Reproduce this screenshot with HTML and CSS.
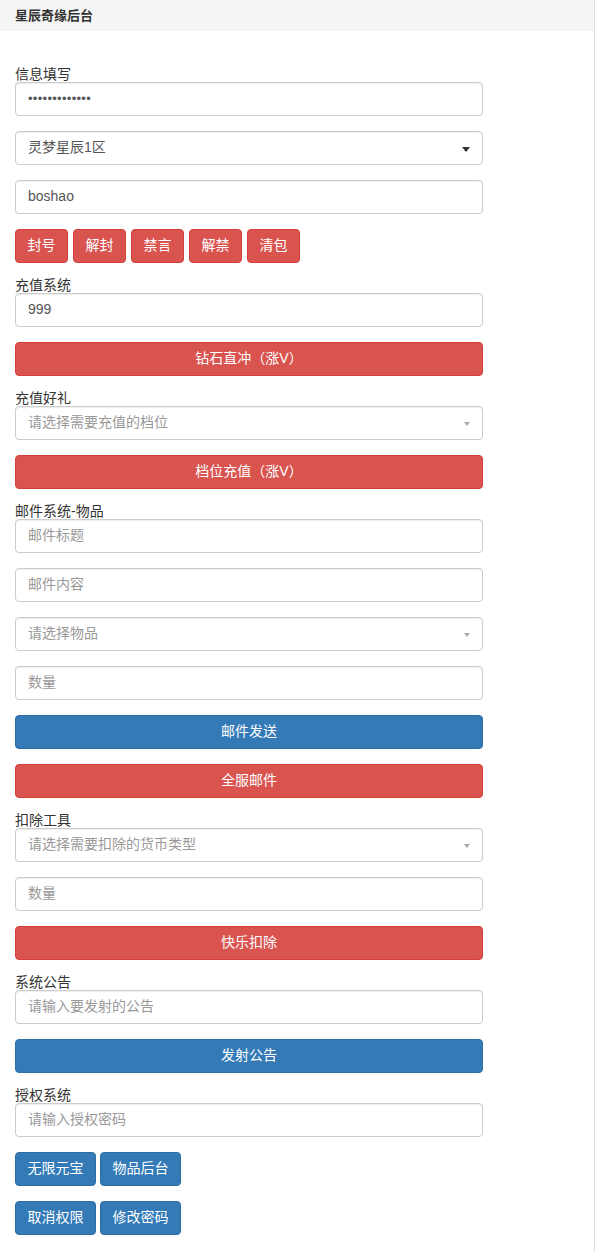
FILE: index.html
```html
<!DOCTYPE html>
<html lang="zh">
<head>
<meta charset="utf-8">
<title>星辰奇缘后台</title>
<link rel="stylesheet" href="styles.css">
</head>
<body>
<div class="panel">
  <div class="panel-head">星辰奇缘后台</div>
  <div class="panel-body">
    <div class="group">
      <label class="lbl">信息填写</label>
      <div class="field"><span class="dots">•••••••••••••</span></div>
    </div>
    <div class="group">
      <div class="field select">灵梦星辰1区</div>
    </div>
    <div class="group">
      <div class="field">boshao</div>
    </div>
    <div class="group btn-row wide-gap">
      <span class="btn red">封号</span>
      <span class="btn red">解封</span>
      <span class="btn red">禁言</span>
      <span class="btn red">解禁</span>
      <span class="btn red">清包</span>
    </div>

    <div class="group">
      <label class="lbl">充值系统</label>
      <div class="field">999</div>
    </div>
    <div class="group"><span class="btn red block">钻石直冲（涨V）</span></div>

    <div class="group">
      <label class="lbl">充值好礼</label>
      <div class="field select ph">请选择需要充值的档位</div>
    </div>
    <div class="group"><span class="btn red block">档位充值（涨V）</span></div>

    <div class="group">
      <label class="lbl">邮件系统-物品</label>
      <div class="field ph">邮件标题</div>
    </div>
    <div class="group"><div class="field ph">邮件内容</div></div>
    <div class="group"><div class="field select ph">请选择物品</div></div>
    <div class="group"><div class="field ph">数量</div></div>
    <div class="group"><span class="btn blue block">邮件发送</span></div>
    <div class="group"><span class="btn red block">全服邮件</span></div>

    <div class="group">
      <label class="lbl">扣除工具</label>
      <div class="field select ph">请选择需要扣除的货币类型</div>
    </div>
    <div class="group"><div class="field ph">数量</div></div>
    <div class="group"><span class="btn red block">快乐扣除</span></div>

    <div class="group">
      <label class="lbl">系统公告</label>
      <div class="field ph">请输入要发射的公告</div>
    </div>
    <div class="group"><span class="btn blue block">发射公告</span></div>

    <div class="group">
      <label class="lbl">授权系统</label>
      <div class="field ph">请输入授权密码</div>
    </div>
    <div class="group btn-row">
      <span class="btn blue">无限元宝</span>
      <span class="btn blue">物品后台</span>
    </div>
    <div class="group btn-row">
      <span class="btn blue">取消权限</span>
      <span class="btn blue">修改密码</span>
    </div>
  </div>
</div>
</body>
</html>
```
FILE: styles.css
```css
html, body {
  margin: 0;
  padding: 0;
  background: #fff;
}
body {
  font-family: "Liberation Sans", "Noto Sans CJK SC", Arial, sans-serif;
  font-size: 14px;
  color: #333;
  height: 1251px;
}
.panel {
  width: 594px;
  min-height: 1251px;
  border-right: 1px solid #dcdcdc;
  box-sizing: content-box;
}
.panel-head {
  height: 31px;
  background: #f5f5f5;
  padding-left: 15px;
  font-size: 13px;
  font-weight: bold;
  line-height: 31px;
  color: #333;
}
.panel-body {
  padding: 36px 0 0 15px;
  width: 468px;
}
.group {
  margin-bottom: 15px;
}
.lbl {
  display: block;
  font-size: 14px;
  line-height: 15px;
  height: 15px;
  color: #333;
}
.field {
  position: relative;
  height: 34px;
  box-sizing: border-box;
  border: 1px solid #ccc;
  border-radius: 4px;
  padding: 0 12px;
  line-height: 31px;
  font-size: 14px;
  color: #555;
  box-shadow: inset 0 1px 1px rgba(0,0,0,0.075);
  background: #fff;
}
.field.ph {
  color: #999;
}
.dots {
  font-family: "Liberation Sans", Arial, sans-serif;
  font-size: 13px;
  letter-spacing: 0.3px;
  color: #555;
}
.select::after {
  content: "";
  position: absolute;
  right: 12px;
  top: 15px;
  border-left: 4px solid transparent;
  border-right: 4px solid transparent;
  border-top: 5px solid #333;
}
.select.ph::after {
  border-left-width: 3.5px;
  border-right-width: 3.5px;
  border-top: 4px solid #aaa;
}
.btn-row {
  display: flex;
  gap: 4px;
}
.btn-row.wide-gap {
  gap: 5px;
}
.btn {
  display: inline-block;
  box-sizing: border-box;
  height: 34px;
  padding: 0 11.5px;
  border: 1px solid transparent;
  border-radius: 4px;
  font-size: 14px;
  line-height: 31px;
  color: #fff;
  text-align: center;
}
.btn.block {
  display: block;
  width: 100%;
}
.red {
  background: #d9534f;
  border-color: #d43f3a;
}
.blue {
  background: #337ab7;
  border-color: #2e6da4;
}
```
